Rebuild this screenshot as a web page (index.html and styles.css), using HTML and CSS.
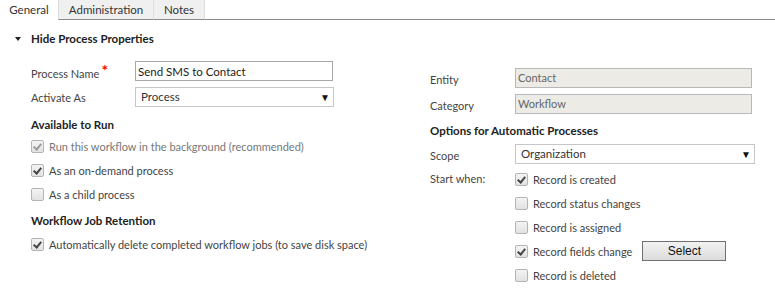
FILE: index.html
```html
<!DOCTYPE html>
<html lang="en">
  <head>
    <meta charset="utf-8">
    <title>Process Properties</title>
    <link rel="stylesheet" href="styles.css">
  </head>
  <body>
    <div class="tabs">
      <div class="tab active">General</div>
      <div class="tab">Administration</div>
      <div class="tab">Notes</div>
      <div class="tab-fill"></div>
    </div>

    <div class="section-title"><span class="caret"></span>Hide Process Properties</div>

    <div class="columns">
      <div class="col left">
        <div class="row">
          <label class="lbl">Process Name<span class="req">*</span></label>
          <input class="field" type="text" value="Send SMS to Contact">
        </div>
        <div class="row">
          <label class="lbl">Activate As</label>
          <div class="select">Process<span class="arrow">&#9660;</span></div>
        </div>

        <h3>Available to Run</h3>
        <div class="check disabled"><span class="box on"></span>Run this workflow in the background (recommended)</div>
        <div class="check"><span class="box on"></span>As an on-demand process</div>
        <div class="check"><span class="box"></span>As a child process</div>

        <h3 class="gap">Workflow Job Retention</h3>
        <div class="check"><span class="box on"></span>Automatically delete completed workflow jobs (to save disk space)</div>
      </div>

      <div class="col right">
        <div class="row">
          <label class="lbl wide">Entity</label>
          <div class="field ro">Contact</div>
        </div>
        <div class="row">
          <label class="lbl wide">Category</label>
          <div class="field ro">Workflow</div>
        </div>

        <h3 class="opts">Options for Automatic Processes</h3>
        <div class="row scope">
          <label class="lbl wide">Scope</label>
          <div class="select long">Organization<span class="arrow">&#9660;</span></div>
        </div>
        <div class="start">
          <label class="lbl wide">Start when:</label>
          <div class="checks">
            <div class="check"><span class="box on"></span>Record is created</div>
            <div class="check"><span class="box"></span>Record status changes</div>
            <div class="check"><span class="box"></span>Record is assigned</div>
            <div class="check"><span class="box on"></span>Record fields change<button class="btn">Select</button></div>
            <div class="check"><span class="box"></span>Record is deleted</div>
          </div>
        </div>
      </div>
    </div>
  </body>
</html>
```

FILE: styles.css
```css
body {
  margin: 0;
  font-family: Lato, "Open Sans", sans-serif;
  font-size: 11px;
  color: #444;
  background: #fff;
}

.tabs {
  display: flex;
  height: 20px;
}

.tab {
  box-sizing: border-box;
  height: 20px;
  line-height: 19px;
  text-align: center;
  background: #f0f0f0;
  border-left: 1px solid #ddd;
  border-bottom: 1px solid #8a8a8a;
  color: #333;
  font-size: 11.5px;
}

.tab.active {
  width: 58px;
  background: #fff;
  border-left: 0;
  border-bottom-color: #fff;
}

.tab:nth-child(2) {
  width: 95px;
}

.tab:nth-child(3) {
  width: 52px;
  border-right: 1px solid #ddd;
}

.tab-fill {
  flex: 1;
  border-bottom: 1px solid #8a8a8a;
}

.section-title {
  margin: 10px 0 0 15px;
  height: 18px;
  line-height: 18px;
  font-weight: bold;
  font-size: 11.5px;
  color: #222;
}

.caret {
  display: inline-block;
  width: 0;
  height: 0;
  border-left: 3px solid transparent;
  border-right: 3px solid transparent;
  border-top: 4px solid #222;
  margin: 0 10px 2px 0;
  vertical-align: middle;
}

.columns {
  display: flex;
  padding-left: 31px;
}

.col.left {
  width: 399px;
  padding-top: 13px;
}

.col.right {
  flex: 1;
  padding-top: 20px;
}

.row {
  display: flex;
  align-items: center;
  height: 20px;
  margin-bottom: 6px;
}

.row.scope {
  margin-bottom: 4px;
}

.lbl {
  width: 104px;
  flex: none;
}

.lbl.wide {
  width: 85px;
  padding-top: 2px;
}

.req {
  color: #e00;
  margin-left: 2px;
  font-size: 16px;
  font-weight: bold;
  position: relative;
  top: -2px;
}

.field {
  box-sizing: border-box;
  width: 198px;
  height: 20px;
  border: 1px solid #a8a8a8;
  padding: 0 2px;
  font-family: inherit;
  font-size: 11.5px;
  color: #222;
  margin: 0;
}

.field.ro {
  width: 237px;
  line-height: 18px;
  background: #ecebe6;
  border-color: #b8b8b8;
  padding: 0 2px;
  font-size: 11px;
  color: #666;
}

.select {
  box-sizing: border-box;
  width: 199px;
  height: 20px;
  line-height: 18px;
  border: 1px solid #c6c6c6;
  padding: 0 3px 0 5px;
  color: #333;
  font-size: 11.5px;
  display: flex;
  justify-content: space-between;
}

.select.long {
  width: 240px;
}

.arrow {
  font-size: 10px;
  color: #111;
}

h3 {
  margin: 9px 0 0;
  height: 18px;
  line-height: 18px;
  font-size: 11.5px;
  color: #222;
}

h3.gap {
  margin-top: 6px;
  margin-bottom: 2px;
}

h3.opts {
  margin-top: 8px;
  margin-bottom: 4px;
}

.check {
  display: flex;
  align-items: center;
  height: 24px;
}

.check.disabled {
  color: #777;
}

.box {
  box-sizing: border-box;
  width: 13px;
  height: 13px;
  border: 1px solid #b4b4b4;
  border-radius: 2px;
  background: linear-gradient(#f4f4f4, #e2e2e2);
  margin-right: 5px;
  flex: none;
  position: relative;
}

.box.on::after {
  content: "";
  position: absolute;
  left: 3px;
  top: 1px;
  width: 3px;
  height: 6px;
  border-right: 2px solid #444;
  border-bottom: 2px solid #444;
  transform: rotate(40deg);
}

.disabled .box.on::after {
  border-color: #9a9a9a;
}

.start {
  display: flex;
  margin-top: -1px;
}

.start .lbl {
  height: 24px;
  line-height: 24px;
  padding-top: 0;
}

.btn {
  box-sizing: border-box;
  width: 84px;
  height: 20px;
  margin-left: 10px;
  border: 1px solid #707070;
  background: linear-gradient(#f2f2f2, #dcdcdc);
  font-family: "Liberation Sans", Arial, sans-serif;
  font-size: 12px;
  color: #111;
  padding: 0;
}
```
